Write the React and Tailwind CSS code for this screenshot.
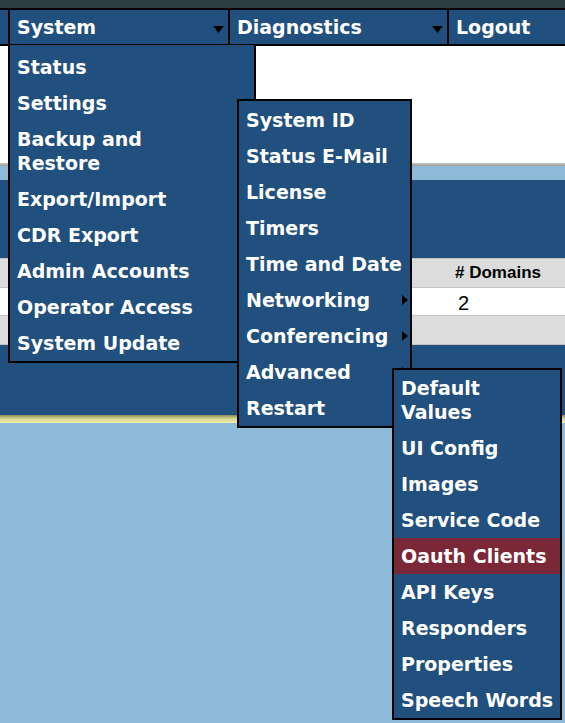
import React from 'react'

const NavCell = ({ label, arrow, className }) => (
  <div className={`relative flex items-center border-l-2 border-black pl-[7px] ${className}`}>
    <span>{label}</span>
    {arrow && (
      <svg className="absolute right-[4px] top-[16px]" width="11" height="7" viewBox="0 0 11 7">
        <polygon points="0,0 11,0 5.5,7" fill="#000" />
      </svg>
    )}
  </div>
)

const SubArrow = () => (
  <svg className="absolute right-[2px] top-[13px]" width="6" height="10" viewBox="0 0 6 10">
    <polygon points="0,0 6,5 0,10" fill="#000" />
  </svg>
)

const MenuItem = ({ children, arrow, active }) => (
  <div
    className={`relative whitespace-nowrap px-[7px] py-[6px] leading-[24px] ${active ? 'bg-[#7a2838]' : ''}`}
  >
    {children}
    {arrow && <SubArrow />}
  </div>
)

const App = () => {
  return (
    <div className="relative h-[723px] w-[565px] overflow-hidden bg-[#8dbad9] font-['DejaVu_Sans',sans-serif] text-[19px] font-bold text-white">
      {/* top strip */}
      <div className="h-[8px] bg-[#2d3d44]" />

      {/* nav bar */}
      <nav className="flex h-[38px] border-y-2 border-black bg-[#214f7e]">
        <div className="w-[8px]" />
        <NavCell label="System" arrow className="w-[220px]" />
        <NavCell label="Diagnostics" arrow className="w-[219px]" />
        <NavCell label="Logout" className="flex-1" />
      </nav>

      {/* page content */}
      <div className="h-[117px] bg-white" />
      <div className="h-[3px] bg-gradient-to-b from-[#c8c8c8] to-[#9a9a9a]" />
      <div className="h-[14px] bg-[#8dbad9]" />
      <div className="h-[78px] bg-[#214f7e]" />
      <div className="font-['Liberation_Sans',sans-serif] text-black">
        <div className="grid h-[30px] grid-cols-[448px_1fr] items-center border-y border-[#c4c4c4] bg-[#dcdcdc] text-[17px] font-bold">
          <div />
          <div className="pl-[7px]"># Domains</div>
        </div>
        <div className="grid h-[27px] grid-cols-[448px_1fr] items-center bg-white text-[20px] font-normal">
          <div />
          <div className="pl-[10px]">2</div>
        </div>
        <div className="h-[30px] border-y border-[#c4c4c4] bg-[#dcdcdc]" />
      </div>
      <div className="h-[70px] bg-[#214f7e]" />
      <div className="h-[8px] bg-gradient-to-b from-[#8a8a5a] via-[#d8d890] to-[#f2f0b0]" />

      {/* System menu */}
      <div className="absolute left-[8px] top-[45px] w-[248px] border-x-2 border-b-2 border-black bg-[#214f7e] pt-[4px]">
        <MenuItem>Status</MenuItem>
        <MenuItem arrow>Settings</MenuItem>
        <MenuItem>
          Backup and
          <br />
          Restore
        </MenuItem>
        <MenuItem>Export/Import</MenuItem>
        <MenuItem>CDR Export</MenuItem>
        <MenuItem>Admin Accounts</MenuItem>
        <MenuItem>Operator Access</MenuItem>
        <MenuItem>System Update</MenuItem>
      </div>

      {/* Settings submenu */}
      <div className="absolute left-[237px] top-[99px] w-[175px] border-2 border-black bg-[#214f7e] pt-[1px]">
        <MenuItem>System ID</MenuItem>
        <MenuItem>Status E-Mail</MenuItem>
        <MenuItem>License</MenuItem>
        <MenuItem>Timers</MenuItem>
        <MenuItem>Time and Date</MenuItem>
        <MenuItem arrow>Networking</MenuItem>
        <MenuItem arrow>Conferencing</MenuItem>
        <MenuItem arrow>Advanced</MenuItem>
        <MenuItem>Restart</MenuItem>
      </div>

      {/* Advanced submenu */}
      <div className="absolute left-[392px] top-[368px] w-[170px] border-2 border-black bg-[#214f7e]">
        <MenuItem>
          Default
          <br />
          Values
        </MenuItem>
        <MenuItem>UI Config</MenuItem>
        <MenuItem>Images</MenuItem>
        <MenuItem>Service Code</MenuItem>
        <MenuItem active>Oauth Clients</MenuItem>
        <MenuItem>API Keys</MenuItem>
        <MenuItem>Responders</MenuItem>
        <MenuItem>Properties</MenuItem>
        <MenuItem>Speech Words</MenuItem>
      </div>
    </div>
  )
}

export default App
